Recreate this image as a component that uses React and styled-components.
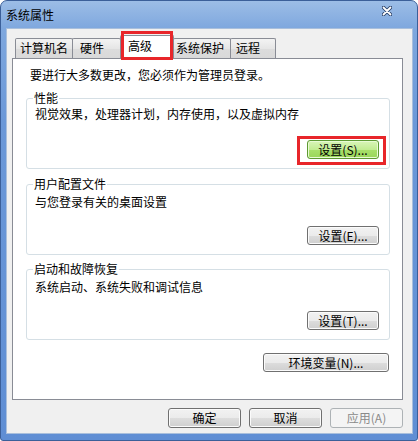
import React from 'react';
import styled, { createGlobalStyle, css } from 'styled-components';

const Global = createGlobalStyle`
  html, body { margin: 0; padding: 0; background: #fff; }
  body {
    width: 418px; height: 441px; overflow: hidden;
    font-family: "Noto Sans CJK SC", "Noto Sans", sans-serif;
    font-size: 12px; color: #000;
  }
  * { box-sizing: border-box; }
`;

const Window = styled.div`
  width: 418px;
  height: 441px;
  display: flex;
  flex-direction: column;
  background: linear-gradient(to bottom, #9cbde6 0px, #7ea7de 28px, #6b98d8 120px, #5f8ed4 100%);
  border: 1px solid #3b5f99;
  border-radius: 7px 7px 3px 3px;
  padding: 0 4px 6px 5px;
`;

const TitleBar = styled.div`
  height: 27px;
  flex: none;
  display: flex;
  align-items: center;
  justify-content: space-between;
`;

const Title = styled.span`
  font-size: 12px;
  line-height: 16px;
  color: #000;
`;

const CloseGlyph = styled.svg`
  align-self: flex-start;
  margin-top: 5px;
  margin-right: 21px;
`;

const Client = styled.div`
  flex: 1;
  display: flex;
  flex-direction: column;
  background: #f0f0f0;
  border: 1px solid #a9bfdc;
  padding: 6px 9px 0 5px;
`;

const TabStrip = styled.div`
  display: flex;
  align-items: flex-start;
  height: 24px;
  margin: 0 0 -1px 3px;
  position: relative;
  z-index: 1;
`;

const Tab = styled.div`
  width: ${p => p.$w}px;
  height: 20px;
  margin-top: 3px;
  margin-left: -1px;
  &:first-child { margin-left: 0; }
  padding-left: ${p => p.$pad}px;
  border: 1px solid #898c95;
  border-bottom: none;
  border-radius: 2px 2px 0 0;
  background: linear-gradient(to bottom, #f3f3f3, #e6e6e6 50%, #dcdcdc 51%, #d9d9d9);
  font-size: 12px;
  line-height: 18px;
  white-space: nowrap;
  ${p => p.$active && css`
    position: relative;
    z-index: 2;
    height: 24px;
    margin-top: 0;
    line-height: 19px;
    background: #fff;
    &::after {
      content: '';
      position: absolute;
      inset: -5px 0 -1px 0;
      border: 3px solid #e8262a;
    }
  `}
`;

const Panel = styled.div`
  height: 342px;
  flex: none;
  background: #fff;
  border: 1px solid #898c95;
  padding: 8px 12px 0 13px;
  display: flex;
  flex-direction: column;
`;

const Intro = styled.div`
  line-height: 16px;
  height: 16px;
  padding-left: 4px;
  white-space: nowrap;
`;

const Group = styled.fieldset`
  margin: ${p => p.$top}px 0 0 0;
  border: 1px solid #d5dfe5;
  border-radius: 3px;
  padding: 0 10px 9px 8px;
  min-width: 0;
`;

const Legend = styled.legend`
  padding: 0 1px;
  margin-left: -2px;
  line-height: 16px;
  height: 16px;
  font-size: 12px;
`;

const Desc = styled.div`
  line-height: 16px;
  height: 16px;
  margin-top: ${p => p.$mt}px;
  white-space: nowrap;
`;

const ButtonRow = styled.div`
  display: flex;
  justify-content: flex-end;
  gap: 8px;
  margin-top: ${p => p.$mt || 0}px;
  padding-right: ${p => p.$pr || 0}px;
`;

const Btn = styled.button`
  position: relative;
  width: ${p => p.$w || 72}px;
  height: ${p => p.$h || 19}px;
  padding: 0;
  font-family: "Noto Sans CJK SC", "Noto Sans", sans-serif;
  font-size: 12px;
  line-height: 1;
  color: #000;
  border: 1px solid #707070;
  border-radius: 3px;
  background: linear-gradient(to bottom, #f2f2f2 0%, #ebebeb 50%, #dddddd 51%, #cfcfcf 100%);
  box-shadow: inset 0 0 0 1px #fbfbfb;
  white-space: nowrap;
  ${p => p.$green && css`
    border-color: #5e9a33;
    background: linear-gradient(to bottom, #d9f5b8 0%, #c2ec92 50%, #a8e06a 51%, #9ad65a 100%);
    box-shadow: inset 0 0 0 1px #e8fbd4;
  `}
  ${p => p.$disabled && css`
    color: #8a8a8a;
    border-color: #adb2b5;
    background: #f4f4f4;
    box-shadow: none;
  `}
  ${p => p.$marked && css`
    &::after {
      content: '';
      position: absolute;
      inset: -5px -8px -7px -11px;
      border: 3px solid #e8262a;
    }
  `}
`;

const BottomRow = styled.div`
  display: flex;
  justify-content: flex-end;
  gap: 8px;
  margin-top: 8px;
`;

const tabs = [
  { label: '计算机名', w: 58, pad: 4 },
  { label: '硬件', w: 49, pad: 7 },
  { label: '高级', w: 54, pad: 7, active: true },
  { label: '系统保护', w: 58, pad: 2 },
  { label: '远程', w: 46, pad: 5 },
];

const groups = [
  { title: '性能', desc: '视觉效果，处理器计划，内存使用，以及虚拟内存', btn: '设置(S)...', top: 7, descMt: 0, btnMt: 18, marked: true },
  { title: '用户配置文件', desc: '与您登录有关的桌面设置', btn: '设置(E)...', top: 7, descMt: 2, btnMt: 16 },
  { title: '启动和故障恢复', desc: '系统启动、系统失败和调试信息', btn: '设置(T)...', top: 6, descMt: 2, btnMt: 16 },
];

export default function App() {
  return (
    <>
      <Global />
      <Window>
        <TitleBar>
          <Title>系统属性</Title>
          <CloseGlyph width="10" height="10" viewBox="0 0 10 10">
            <path d="M1.5 1.5 L8.5 8.5 M8.5 1.5 L1.5 8.5" stroke="#2a3f66" strokeWidth="3.6" strokeLinecap="round" />
            <path d="M1.5 1.5 L8.5 8.5 M8.5 1.5 L1.5 8.5" stroke="#ffffff" strokeWidth="1.8" strokeLinecap="round" />
          </CloseGlyph>
        </TitleBar>
        <Client>
          <TabStrip>
            {tabs.map(t => (
              <Tab key={t.label} $w={t.w} $pad={t.pad} $active={t.active}>{t.label}</Tab>
            ))}
          </TabStrip>
          <Panel>
            <Intro>要进行大多数更改，您必须作为管理员登录。</Intro>
            {groups.map(g => (
              <Group key={g.title} $top={g.top}>
                <Legend>{g.title}</Legend>
                <Desc $mt={g.descMt}>{g.desc}</Desc>
                <ButtonRow $mt={g.btnMt}>
                  <Btn $green={g.marked} $marked={g.marked}>{g.btn}</Btn>
                </ButtonRow>
              </Group>
            ))}
            <ButtonRow $mt={13} $pr={1}>
              <Btn $w={126}>环境变量(N)...</Btn>
            </ButtonRow>
          </Panel>
          <BottomRow>
            <Btn $w={73} $h={20}>确定</Btn>
            <Btn $w={73} $h={20}>取消</Btn>
            <Btn $w={73} $h={20} $disabled>应用(A)</Btn>
          </BottomRow>
        </Client>
      </Window>
    </>
  );
}
